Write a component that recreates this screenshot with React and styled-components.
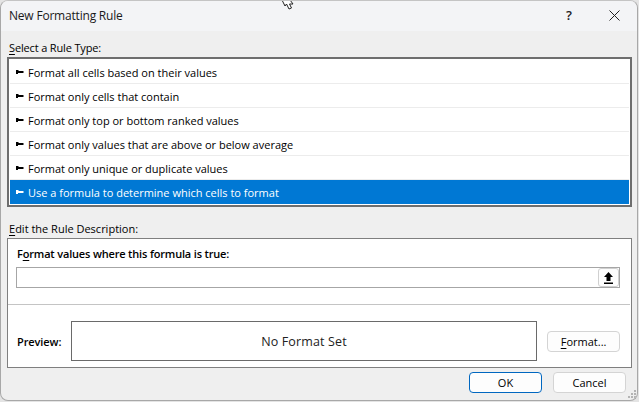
import React from "react";
import styled, { createGlobalStyle } from "styled-components";

const Global = createGlobalStyle`
  html, body { margin: 0; padding: 0; background: #e4e4e4; }
  body { width: 639px; height: 402px; overflow: hidden; font-family: "Open Sans", "Noto Sans", "Liberation Sans", sans-serif; font-size: 11px; color: #000; }
`;

const Window = styled.div`
  position: relative;
  box-sizing: border-box;
  width: 638px;
  height: 401px;
  background: #efefef;
  border: 1px solid #a8a8a8;
  border-top-color: #c4c4c4;
  border-radius: 8px;
  overflow: hidden;
`;

const TitleBar = styled.div`
  display: flex;
  align-items: center;
  height: 30px;
  background: #f3f4f6;
`;

const Title = styled.div`
  flex: 1;
  padding: 0 0 2px 8px;
  font-size: 12px;
  letter-spacing: -0.2px;
  color: #1a1a1a;
`;

const TitleButton = styled.button`
  display: flex;
  align-items: center;
  justify-content: center;
  width: ${(p) => p.$w}px;
  height: 30px;
  padding: 0 0 2px;
  border: 0;
  background: transparent;
  font: inherit;
  font-size: 13px;
  font-weight: 600;
  color: #222;
`;

const Content = styled.div`
  display: flex;
  flex-direction: column;
  padding: 0 5px 0 6px;
`;

const SectionLabel = styled.div`
  box-sizing: border-box;
  height: ${(p) => p.$h}px;
  padding: 0 0 2px 2px;
  display: flex;
  align-items: flex-end;
  line-height: 15px;
  font-size: 11px;
  letter-spacing: ${(p) => p.$spacing || 0}px;
  white-space: pre;
`;

const Under = styled.span`
  text-decoration: underline;
  text-underline-offset: 2px;
`;

const RuleList = styled.div`
  box-sizing: border-box;
  height: 150px;
  padding: 1px;
  background: #fff;
  border: 2px solid #6e6e6e;
  display: flex;
  flex-direction: column;
`;

const Rule = styled.div`
  box-sizing: border-box;
  height: 24px;
  flex: none;
  display: flex;
  align-items: center;
  gap: 4px;
  padding: ${(p) => (p.$selected ? "0" : "1px")} 0 0 6px;
  font-size: 11px;
  background: ${(p) => (p.$selected ? "#0078d4" : "#fff")};
  color: ${(p) => (p.$selected ? "#fff" : "#000")};
  border-bottom: ${(p) => (p.$selected ? "0" : "1px solid #ececec")};
`;

const Bullet = styled.svg`
  width: 8px;
  height: 4px;
  flex: none;
  fill: currentColor;
`;

const DescriptionBox = styled.div`
  box-sizing: border-box;
  height: 130px;
  background: #fff;
  border: 1px solid #7f7f7f;
  display: flex;
  flex-direction: column;
`;

const FormulaSection = styled.div`
  height: 66px;
  flex: none;
  box-sizing: border-box;
  padding: 7px 10px 0 8px;
  border-bottom: 1px solid #c4c4c4;
  margin-right: 1px;
`;

const BoldLabel = styled.div`
  font-weight: 600;
  font-size: 11px;
  line-height: 15px;
  margin-left: 1px;
  letter-spacing: -0.17px;
`;

const FormulaInput = styled.div`
  box-sizing: border-box;
  height: 21px;
  margin-top: 6px;
  border: 1px solid #a6a6a6;
  display: flex;
  justify-content: flex-end;
  align-items: center;
`;

const PickerButton = styled.div`
  box-sizing: border-box;
  width: 21px;
  height: 19px;
  border: 1px solid #d0d0d0;
  border-radius: 3px;
  background: #fdfdfd;
  display: flex;
  align-items: center;
  justify-content: center;
`;

const PreviewRow = styled.div`
  display: flex;
  align-items: center;
  padding: 16px 11px 0 9px;
`;

const PreviewLabel = styled.div`
  width: 54px;
  font-weight: 600;
  font-size: 11px;
  letter-spacing: -0.1px;
`;

const PreviewBox = styled.div`
  box-sizing: border-box;
  width: 467px;
  height: 40px;
  border: 1px solid #6a6a6a;
  display: flex;
  align-items: center;
  justify-content: center;
  font-size: 12.5px;
  letter-spacing: 0.15px;
  color: #222;
`;

const Button = styled.button`
  box-sizing: border-box;
  width: ${(p) => p.$w || 73}px;
  height: 21px;
  padding: 0;
  font: inherit;
  font-size: 11px;
  color: #000;
  background: #fdfdfd;
  border: 1px solid ${(p) => (p.$primary ? "#0067c0" : "#d4d4d4")};
  border-radius: 4px;
`;

const FormatButton = styled(Button)`
  margin-left: 10px;
`;

const Footer = styled.div`
  display: flex;
  justify-content: flex-end;
  gap: 11px;
  padding: 4px 6px 0 0;
`;

const Grip = styled.svg`
  position: absolute;
  right: 1px;
  bottom: 1px;
  width: 9px;
  height: 9px;
  fill: #b4b4b4;
`;

const Cursor = styled.svg`
  position: absolute;
  left: 280px;
  top: -1px;
  width: 13px;
  height: 10px;
`;

const rules = [
  "Format all cells based on their values",
  "Format only cells that contain",
  "Format only top or bottom ranked values",
  "Format only values that are above or below average",
  "Format only unique or duplicate values",
  "Use a formula to determine which cells to format",
];

export default function App() {
  return (
    <>
      <Global />
      <Window>
        <TitleBar>
          <Title>New Formatting Rule</Title>
          <TitleButton $w={46}>?</TitleButton>
          <TitleButton $w={45}>
            <svg width="11" height="11" viewBox="0 0 11 11" fill="none" stroke="#222" strokeWidth="1">
              <path d="M.5.5l10 10M10.5.5l-10 10" />
            </svg>
          </TitleButton>
        </TitleBar>
        <Content>
          <SectionLabel $h={26} $spacing={-0.15}>
            <span><Under>S</Under>elect a Rule Type:</span>
          </SectionLabel>
          <RuleList>
            {rules.map((r, i) => (
              <Rule key={r} $selected={i === 5}>
                <Bullet viewBox="0 0 8 4"><path d="M0 0h2l1 1h4l1 1-1 1H2v1H0z" /></Bullet>
                {r}
              </Rule>
            ))}
          </RuleList>
          <SectionLabel $h={31}>
            <span><Under>E</Under>dit the Rule Description:</span>
          </SectionLabel>
          <DescriptionBox>
            <FormulaSection>
              <BoldLabel>F<Under>o</Under>rmat values where this formula is true:</BoldLabel>
              <FormulaInput>
                <PickerButton>
                  <svg width="11" height="12" viewBox="0 0 11 12" fill="#000">
                    <path d="M5.5 0L10 5H7.5v4h-4V5H1zM1 10.5h9V12H1z" />
                  </svg>
                </PickerButton>
              </FormulaInput>
            </FormulaSection>
            <PreviewRow>
              <PreviewLabel>Preview:</PreviewLabel>
              <PreviewBox>No Format Set</PreviewBox>
              <FormatButton><Under>F</Under>ormat...</FormatButton>
            </PreviewRow>
          </DescriptionBox>
          <Footer>
            <Button $primary>OK</Button>
            <Button>Cancel</Button>
          </Footer>
        </Content>
        <Cursor viewBox="0 0 13 10" fill="#fff" stroke="#222" strokeWidth="1">
          <path d="M1 0l3 6 1.5-2L8 9l2.5-1-2-4H12L9 0z" />
        </Cursor>
        <Grip viewBox="0 0 9 9">
          <path d="M7 0h2v2H7zM4 3h2v2H4zM7 3h2v2H7zM1 6h2v2H1zM4 6h2v2H4zM7 6h2v2H7z" />
        </Grip>
      </Window>
    </>
  );
}
